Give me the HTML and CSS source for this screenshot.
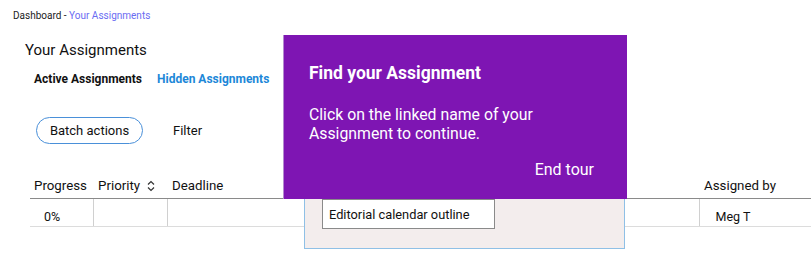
FILE: index.html
```html
<!DOCTYPE html>
<html lang="en">
<head>
    <meta charset="UTF-8">
    <meta name="viewport" content="width=device-width, initial-scale=1.0">
    <title>Your Assignments</title>
    <link rel="stylesheet" href="styles.css">
</head>
<body>
    <div class="page">
        <div class="breadcrumb">Dashboard - <a href="#">Your Assignments</a></div>
        <h1 class="title">Your Assignments</h1>
        <div class="tabs">
            <span class="tab active">Active Assignments</span>
            <a class="tab" href="#">Hidden Assignments</a>
        </div>
        <div class="toolbar">
            <button class="batch">Batch actions</button>
            <span class="filter">Filter</span>
        </div>
        <table class="assignments">
            <colgroup>
                <col style="width:63px">
                <col style="width:74px">
                <col style="width:137px">
                <col style="width:320px">
                <col style="width:75px">
                <col style="width:140px">
            </colgroup>
            <thead>
                <tr>
                    <th>Progress</th>
                    <th class="sortable">Priority
                        <svg class="sort" width="8" height="12" viewBox="0 0 8 12">
                            <path d="M1 4.5 L4 1.5 L7 4.5 M1 7.5 L4 10.5 L7 7.5" fill="none" stroke="#333" stroke-width="1.2"/>
                        </svg>
                    </th>
                    <th>Deadline</th>
                    <th></th>
                    <th></th>
                    <th>Assigned by</th>
                </tr>
            </thead>
            <tbody>
                <tr>
                    <td class="progress">0%</td>
                    <td></td>
                    <td></td>
                    <td></td>
                    <td></td>
                    <td class="assigner">Meg T</td>
                </tr>
            </tbody>
        </table>

        <!-- tour spotlight over the name cell -->
        <div class="spotlight">
            <div class="name-box">Editorial calendar outline</div>
        </div>

        <div class="tour">
            <h2>Find your Assignment</h2>
            <p>Click on the linked name of your Assignment to continue.</p>
            <a class="end-tour" href="#">End tour</a>
        </div>
    </div>
</body>
</html>
```

FILE: styles.css
```css
body {
    margin: 0;
    font-family: Roboto, "Liberation Sans", Arial, sans-serif;
    color: #111;
    background-color: #fff;
    overflow: hidden;
}
.page {
    position: relative;
    padding: 9px 0 0 13px;
    height: 262px;
    box-sizing: border-box;
}
.breadcrumb {
    font-size: 10px;
    line-height: 13px;
    color: #222;
}
.breadcrumb a {
    color: #6a6cf2;
    text-decoration: none;
}
.title {
    margin: 19px 0 0 12px;
    font-size: 15px;
    line-height: 18px;
    font-weight: 400;
}
.tabs {
    margin: 12px 0 0 21px;
    display: flex;
    gap: 15px;
    font-size: 12px;
    line-height: 16px;
    font-weight: 700;
}
.tab {
    text-decoration: none;
    color: #1c87d8;
}
.tab.active {
    color: #111;
}
.toolbar {
    margin: 30px 0 0 23px;
    display: flex;
    align-items: center;
    gap: 30px;
    font-size: 13px;
}
.batch {
    height: 27px;
    width: 107px;
    padding: 0;
    border: 1px solid #4a90d9;
    border-radius: 14px;
    background-color: #fff;
    font-family: inherit;
    font-size: 13px;
    color: #111;
}
.filter {
    color: #111;
}
.assignments {
    margin: 28px 0 0 17px;
    border-collapse: collapse;
    table-layout: fixed;
    width: 809px;
}
.assignments th {
    height: 26px;
    padding: 0 0 0 5px;
    text-align: left;
    font-weight: 400;
    font-size: 13.3px;
    border-bottom: 1px solid #8a8a8a;
    white-space: nowrap;
}
.assignments th:first-child {
    padding-left: 4px;
}
.sort {
    margin-left: 4px;
    vertical-align: -2px;
}
.assignments td {
    height: 28px;
    padding: 7px 0 0 16px;
    box-sizing: border-box;
    border-bottom: 1px solid #dcdcdc;
    border-left: 1px solid #d0d0d0;
    font-size: 12.5px;
}
.assignments td:first-child {
    border-left: none;
    padding-left: 14px;
}
.spotlight {
    position: absolute;
    left: 304px;
    top: 198px;
    width: 319px;
    height: 49px;
    background-color: #f3eded;
    border: 1px solid #8fc0e6;
}
.name-box {
    margin: 0 0 0 17px;
    width: 165px;
    height: 28px;
    padding-left: 6px;
    background-color: #fff;
    border: 1px solid #8a8a8a;
    font-size: 12.8px;
    line-height: 30px;
    color: #111;
}
.tour {
    position: absolute;
    left: 283px;
    top: 35px;
    width: 344px;
    height: 164px;
    box-sizing: border-box;
    padding: 28px 33px 0 25px;
    background-color: #7e15b3;
    border-left: 1px solid #b58ad0;
    color: #fff;
}
.tour h2 {
    margin: 0;
    font-size: 17.5px;
    line-height: 20px;
    font-weight: 700;
}
.tour p {
    margin: 22px 0 0 0;
    font-size: 15.8px;
    line-height: 19px;
}
.end-tour {
    display: block;
    margin-top: 17px;
    text-align: right;
    font-size: 16px;
    color: #fff;
    text-decoration: none;
}
```
